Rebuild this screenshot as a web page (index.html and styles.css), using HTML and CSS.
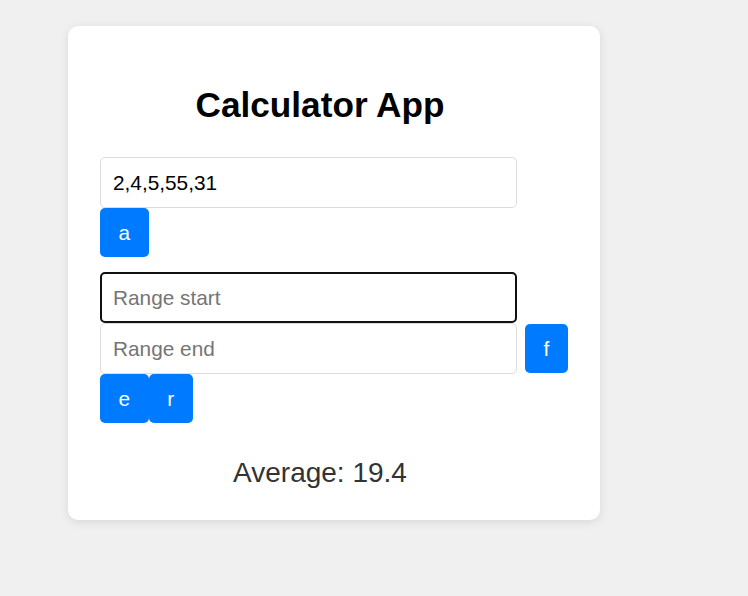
FILE: index.html
```
<!DOCTYPE html>
<html>
<head>
<meta charset="utf-8">
<link rel="stylesheet" href="styles.css">
</head>
<body>
<div class="card">
  <h1 class="title">Calculator App</h1>
  <div class="field">2,4,5,55,31</div>
  <div class="row"><button class="btn">a</button></div>
  <div class="field placeholder focused range-start">Range start</div>
  <div class="row end-row">
    <div class="field placeholder">Range end</div>
    <button class="btn btn-f">f</button>
  </div>
  <div class="row"><button class="btn">e</button><button class="btn">r</button></div>
  <div class="result">Average: 19.4</div>
</div>
</body>
</html>
```
FILE: styles.css
```
html, body {
  margin: 0;
  padding: 0;
}
body {
  background: #f0f0f0;
  font-family: "Liberation Sans", Arial, sans-serif;
  width: 748px;
  height: 596px;
  overflow: hidden;
}
.card {
  margin: 26px 0 0 68px;
  width: 532px;
  height: 494px;
  box-sizing: border-box;
  padding: 32px;
  background: #ffffff;
  border-radius: 10px;
  box-shadow: 0 2px 10px rgba(0, 0, 0, 0.1);
}
.title {
  width: 440px;
  margin: 27px 0 33px 0;
  font-size: 35.2px;
  font-weight: bold;
  text-align: center;
  color: #000;
  line-height: 39px;
}
.field {
  width: 417px;
  height: 51px;
  box-sizing: border-box;
  border: 1px solid #dddddd;
  border-radius: 5px;
  padding: 0 12px;
  font-size: 20.8px;
  line-height: 49px;
  color: #000;
  background: #fff;
}
.placeholder {
  color: #757575;
}
.focused {
  border: 2px solid #101010;
  border-radius: 5px;
  padding: 0 11px;
  line-height: 47px;
}
.range-start {
  margin-top: 15px;
}
.row {
  display: flex;
  align-items: flex-start;
}
.end-row {
  gap: 8px;
}
.btn {
  height: 49px;
  padding: 0 18.6px;
  border: none;
  border-radius: 5px;
  background: #007bff;
  color: #fff;
  font-family: "Liberation Sans", Arial, sans-serif;
  font-size: 20.8px;
  line-height: 49px;
  margin: 0;
}
.btn-f {
  margin-top: 1px;
}
.result {
  width: 440px;
  margin-top: 34px;
  text-align: center;
  font-size: 28px;
  color: #333;
  line-height: 31px;
}
```
